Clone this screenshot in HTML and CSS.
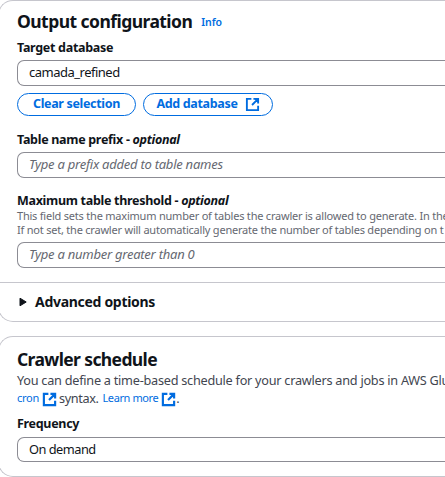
FILE: index.html
```html
<!DOCTYPE html>
<html lang="en">
<head>
<meta charset="utf-8">
<title>Crawler output and scheduling</title>
<link rel="stylesheet" href="styles.css">
</head>
<body>
<svg class="defs" aria-hidden="true">
  <symbol id="external" viewBox="0 0 16 16">
    <path d="M14 9.2V14H2V2h4.8M9 2h5v5M7.5 8.5L14 2" fill="none" stroke="currentColor"/>
    <path d="M9.5 1.5h5v5z" fill="currentColor"/>
  </symbol>
</svg>
<main class="page">
  <section class="card output">
    <div class="content">
      <header class="head"><h2 class="title t-output">Output configuration</h2><a class="info">Info</a></header>
      <div class="label l-target">Target database</div>
      <div class="input"><span class="v-db">camada_refined</span></div>
      <div class="buttons">
        <button class="btn clear">Clear selection</button>
        <button class="btn add">Add database<svg class="icon"><use href="#external"/></svg></button>
      </div>
      <div class="label l-prefix">Table name prefix - <i>optional</i></div>
      <div class="input placeholder">Type a prefix added to table names</div>
      <div class="label l-max">Maximum table threshold - <i>optional</i></div>
      <p class="help">This field sets the maximum number of tables the crawler is allowed to generate. In the<br>If not set, the crawler will automatically generate the number of tables depending on t</p>
      <div class="input placeholder">Type a number greater than 0</div>
    </div>
    <div class="advanced">
      <svg class="caret" viewBox="0 0 8 10"><path d="M1 1.2v7.6L7.2 5z" fill="currentColor" stroke="currentColor" stroke-linejoin="round"/></svg>
      <span>Advanced options</span>
    </div>
  </section>
  <section class="card schedule">
    <h2 class="title t-crawler">Crawler schedule</h2>
    <p class="desc">You can define a time-based schedule for your crawlers and jobs in AWS Glu</p>
    <p class="desc links"><a>cron</a><svg class="icon"><use href="#external"/></svg><span class="syntax">syntax.</span><a class="learn">Learn more</a><svg class="icon"><use href="#external"/></svg><span>.</span></p>
    <div class="label l-freq">Frequency</div>
    <div class="input select"><span class="v-freq">On demand</span></div>
  </section>
</main>
</body>
</html>
```
FILE: styles.css
```css
* { box-sizing: border-box; }
body {
  margin: 0;
  overflow: hidden;
  background: #fff;
  color: #0f141a;
  font-family: "Noto Sans", "Open Sans", sans-serif;
  font-size: 13px;
  line-height: 18px;
  white-space: nowrap;
}
h2, p { margin: 0; }
.defs { display: none; }
.page { display: flex; flex-direction: column; gap: 14px; width: 449px; margin-left: -2px; }
.card { border: 1px solid #c6c6cd; border-right: 0; border-radius: 15px 0 0 15px; }
.output { height: 322px; }
.content { height: 281px; padding: 8px 0 0 18px; }
.head { display: flex; align-items: center; gap: 9px; height: 24px; }
.title { font-size: 17.5px; line-height: 24px; font-weight: 700; letter-spacing: -0.55px; }
.info { color: #006ce0; font-size: 10.5px; font-weight: 600; letter-spacing: -0.1px; padding-top: 2px; }
.label { font-weight: 700; font-size: 12.5px; height: 18px; letter-spacing: -0.3px; }
.l-target { margin: 6px 0 3px; }
.input { display: flex; align-items: center; height: 26px; padding: 0 0 2px 11px; border: 1px solid #8c8c94; border-right: 0; border-radius: 7px 0 0 7px; }
.v-db { letter-spacing: -0.5px; }
.placeholder { color: #656871; font-style: italic; letter-spacing: -0.25px; }
.buttons { display: flex; gap: 7px; margin: 7px 0 15px; }
.btn { display: flex; align-items: center; justify-content: center; height: 23px; border: 1px solid #006ce0; border-radius: 12px; background: #fff; color: #006ce0; font: 700 12.5px/18px "Noto Sans", sans-serif; letter-spacing: -0.33px; padding: 0 0 1px; }
.clear { width: 119px; }
.add { width: 130px; gap: 7px; }
.icon { width: 15px; height: 15px; flex: none; color: #006ce0; stroke-width: 2; }
.l-prefix { margin-bottom: 3px; }
.l-max { margin: 14px 0 0; }
.help { color: #656871; font-size: 11px; line-height: 14px; letter-spacing: -0.215px; margin: -1px 0 5px; }
.advanced { display: flex; align-items: center; gap: 8px; height: 39px; border-top: 1px solid #c6c6cd; padding-left: 20px; font-size: 14px; font-weight: 700; letter-spacing: -0.3px; }
.caret { width: 8px; height: 10px; }
.schedule { height: 141px; padding: 11px 0 0 18px; }
.t-crawler { letter-spacing: -0.62px; line-height: 23px; }
.desc { color: #424650; font-size: 12.7px; height: 18px; letter-spacing: -0.25px; }
.links { display: flex; align-items: center; }
.links a { color: #006ce0; font-size: 11px; }
.links .learn { letter-spacing: -0.4px; }
.links .icon { margin: 2px 0 0 3px; stroke-width: 2.3; }
.syntax { margin: 0 4px 0 2px; letter-spacing: -0.4px; }
.l-freq { margin: 8px 0 4px; }
.select { height: 25px; }
.v-freq { font-size: 12.8px; letter-spacing: -0.5px; }
```
